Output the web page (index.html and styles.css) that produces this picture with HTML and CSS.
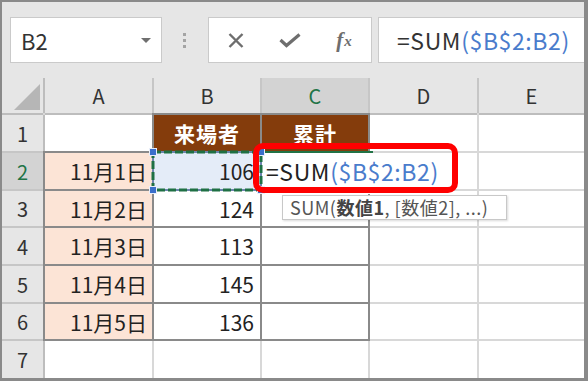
FILE: index.html
```html
<!DOCTYPE html>
<html lang="ja">
<head>
    <meta charset="UTF-8">
    <meta name="viewport" content="width=device-width, initial-scale=1.0">
    <title>SUM 累計</title>
    <link rel="stylesheet" href="styles.css">
</head>
<body>
    <div class="frame">
        <div class="toolbar">
            <div class="namebox"><span>B2</span><span class="caret"></span></div>
            <div class="grip"><i></i><i></i><i></i></div>
            <div class="btns">
                <span class="btn">
                    <svg width="16" height="15" viewBox="0 0 16 15"><path d="M1.5 1 L14.5 14 M14.5 1 L1.5 14" stroke="#6e6e6e" stroke-width="2.4" fill="none"/></svg>
                </span>
                <span class="btn">
                    <svg width="22" height="15" viewBox="0 0 22 15"><path d="M1.5 7 L7.5 12.5 L20.5 1.5" stroke="#6e6e6e" stroke-width="3.2" fill="none"/></svg>
                </span>
                <span class="btn fx">f<span class="x">x</span></span>
            </div>
            <div class="fbar">=SUM<span class="ref">($B$2:B2)</span></div>
        </div>

        <div class="sheet">
            <div class="corner"><span class="tri"></span></div>
            <div class="ch">A</div>
            <div class="ch">B</div>
            <div class="ch sel">C</div>
            <div class="ch">D</div>
            <div class="ch">E</div>

            <div class="rh">1</div>
            <div class="c"></div>
            <div class="c t hd">来場者</div>
            <div class="c t hd">累計</div>
            <div class="c"></div>
            <div class="c"></div>

            <div class="rh sel">2</div>
            <div class="c t day">11月1日</div>
            <div class="c t num pick">106</div>
            <div class="c t"></div>
            <div class="c"></div>
            <div class="c"></div>

            <div class="rh">3</div>
            <div class="c t day">11月2日</div>
            <div class="c t num">124</div>
            <div class="c t"></div>
            <div class="c"></div>
            <div class="c"></div>

            <div class="rh">4</div>
            <div class="c t day">11月3日</div>
            <div class="c t num">113</div>
            <div class="c t"></div>
            <div class="c"></div>
            <div class="c"></div>

            <div class="rh">5</div>
            <div class="c t day">11月4日</div>
            <div class="c t num">145</div>
            <div class="c t"></div>
            <div class="c"></div>
            <div class="c"></div>

            <div class="rh">6</div>
            <div class="c t day">11月5日</div>
            <div class="c t num">136</div>
            <div class="c t"></div>
            <div class="c"></div>
            <div class="c"></div>

            <div class="rh">7</div>
            <div class="c"></div>
            <div class="c"></div>
            <div class="c"></div>
            <div class="c"></div>
            <div class="c"></div>

            <!-- range marquee on B2 -->
            <svg class="marquee" width="118" height="48" viewBox="0 0 118 48">
                <rect x="5" y="5" width="108" height="38" fill="none" stroke="#4f7fd0" stroke-width="1"/>
                <rect x="5" y="5" width="108" height="38" fill="none" stroke="#1f7044" stroke-width="3" stroke-dasharray="8 3"/>
                <rect x="1.5" y="1.5" width="7" height="7" fill="#3b6fcb" stroke="#e8eefa" stroke-width="1"/>
                <rect x="109.5" y="1.5" width="7" height="7" fill="#3b6fcb" stroke="#e8eefa" stroke-width="1"/>
                <rect x="1.5" y="39.5" width="7" height="7" fill="#3b6fcb" stroke="#e8eefa" stroke-width="1"/>
                <rect x="109.5" y="39.5" width="7" height="7" fill="#3b6fcb" stroke="#e8eefa" stroke-width="1"/>
            </svg>

            <!-- in-cell editor on C2 -->
            <div class="active"><span class="handle"></span></div>
            <div class="editor">=SUM<span class="ref">($B$2:B2)</span></div>
            <div class="callout"></div>
            <div class="tip">SUM(<b>数値1</b>, [数値2], ...)</div>
        </div>
    </div>
</body>
</html>
```

FILE: styles.css
```css
body {
    margin: 0;
    font-family: "Noto Sans CJK JP", "Noto Sans", sans-serif;
    color: #222;
}

.frame {
    width: 588px;
    height: 381px;
    box-sizing: border-box;
    border: 2px solid #8a8a8a;
    border-right-width: 4px;
    border-bottom-width: 3px;
    background: #e6e6e6;
    display: flex;
    flex-direction: column;
    overflow: hidden;
}

/* Formula bar row */
.toolbar {
    height: 76px;
    flex: none;
    display: flex;
    align-items: center;
    padding-left: 8px;
}

.namebox {
    width: 152px;
    height: 46px;
    box-sizing: border-box;
    background: #fff;
    border: 1px solid #cacaca;
    display: flex;
    align-items: center;
    justify-content: space-between;
    padding: 0 10px;
    font-size: 22px;
    line-height: 1;
    color: #333;
}

.caret {
    width: 0;
    height: 0;
    border-left: 5px solid transparent;
    border-right: 5px solid transparent;
    border-top: 5px solid #6f6f6f;
}

.grip {
    width: 3px;
    margin: 0 22px 0 21px;
    display: flex;
    flex-direction: column;
    gap: 3px;
}

.grip i {
    display: block;
    width: 3px;
    height: 3px;
    background: #a4a4a4;
}

.btns {
    width: 164px;
    height: 46px;
    box-sizing: border-box;
    background: #fff;
    border: 1px solid #cacaca;
    display: flex;
}

.btn {
    width: 54px;
    display: flex;
    align-items: center;
    justify-content: center;
}

.fx {
    font-family: "Liberation Serif", serif;
    font-style: italic;
    font-weight: bold;
    font-size: 21px;
    color: #6e6e6e;
    padding-top: 1px;
}

.fx .x {
    font-size: 15px;
    margin-left: 1px;
    position: relative;
    top: 1px;
}

.fbar {
    flex: 1;
    height: 46px;
    box-sizing: border-box;
    margin-left: 6px;
    background: #fff;
    border: 1px solid #cacaca;
    border-right: none;
    padding-left: 18px;
    font-size: 23px;
    letter-spacing: 0.6px;
    line-height: 44px;
    color: #333;
    white-space: nowrap;
}

.ref {
    color: #4a7ccc;
}

/* Sheet grid */
.sheet {
    flex: 1;
    position: relative;
    display: grid;
    grid-template-columns: 41px 107px 106px 106px 107px 105px;
    grid-template-rows: 35px 36px 36px 35px 36px 36px 35px 1fr;
    gap: 2px;
    background: #d8d8d8;
    font-size: 20px;
}

.corner, .ch, .rh {
    background: #e6e6e6;
    color: #333;
    display: flex;
    align-items: center;
    justify-content: center;
}

.ch {
    box-shadow: 0 2px 0 #bdbdbd, 2px 0 0 #c6c6c6;
}

.rh {
    box-shadow: 2px 0 0 #bdbdbd, 0 2px 0 #c6c6c6;
}

.corner {
    position: relative;
    box-shadow: 2px 0 0 #bdbdbd, 0 2px 0 #bdbdbd;
}

.tri {
    position: absolute;
    right: 3px;
    bottom: 3px;
    width: 0;
    height: 0;
    border-left: 26px solid transparent;
    border-bottom: 26px solid #b6b6b6;
}

.ch.sel {
    background: #d3d3d3;
    color: #217346;
    box-shadow: 0 2px 0 #217346, 2px 0 0 #c6c6c6;
}

.rh.sel {
    background: #d3d3d3;
    color: #217346;
    box-shadow: 2px 0 0 #217346, 0 2px 0 #c6c6c6;
}

.c {
    background: #fff;
    display: flex;
    align-items: center;
    font-size: 21px;
}

.c.t {
    box-shadow: 0 0 0 2px #8a8a8a;
}

.hd {
    background: #843c0c;
    color: #fff;
    font-weight: bold;
    font-size: 21px;
    letter-spacing: 1px;
    justify-content: center;
}

.day {
    background: #fce4d6;
    justify-content: flex-end;
    padding-right: 5px;
}

.num {
    justify-content: flex-end;
    padding-right: 6px;
}

.pick {
    background: #e4ecf8;
}

/* Overlays: selection, editor, callout, tooltip */
.marquee {
    position: absolute;
    left: 146px;
    top: 69px;
    z-index: 2;
}

.active {
    position: absolute;
    left: 259px;
    top: 73px;
    width: 112px;
    height: 40px;
    box-sizing: border-box;
    border-top: 2px solid #217346;
    border-bottom: 2px solid #217346;
    z-index: 1;
}

.handle {
    position: absolute;
    right: -2px;
    bottom: -5px;
    width: 5px;
    height: 5px;
    background: #217346;
    border: 1px solid #fff;
}

.editor {
    position: absolute;
    left: 261px;
    top: 75px;
    width: 194px;
    height: 36px;
    box-sizing: border-box;
    background: #fff;
    padding-left: 3px;
    font-size: 23px;
    letter-spacing: 0.6px;
    line-height: 36px;
    color: #222;
    white-space: nowrap;
    z-index: 1;
}

.callout {
    position: absolute;
    left: 251px;
    top: 65px;
    width: 205px;
    height: 50px;
    box-sizing: border-box;
    border: 6px solid #ff0000;
    border-radius: 10px;
    z-index: 3;
}

.tip {
    position: absolute;
    left: 280px;
    top: 117px;
    width: 225px;
    height: 25px;
    box-sizing: border-box;
    background: #fff;
    border: 1px solid #c8c8c8;
    box-shadow: 1px 1px 2px rgba(0, 0, 0, 0.15);
    padding-left: 7px;
    font-size: 18px;
    letter-spacing: 0.5px;
    line-height: 23px;
    color: #555;
    white-space: nowrap;
    overflow: hidden;
    z-index: 3;
}

.tip b {
    font-weight: 600;
    color: #444;
}
```
